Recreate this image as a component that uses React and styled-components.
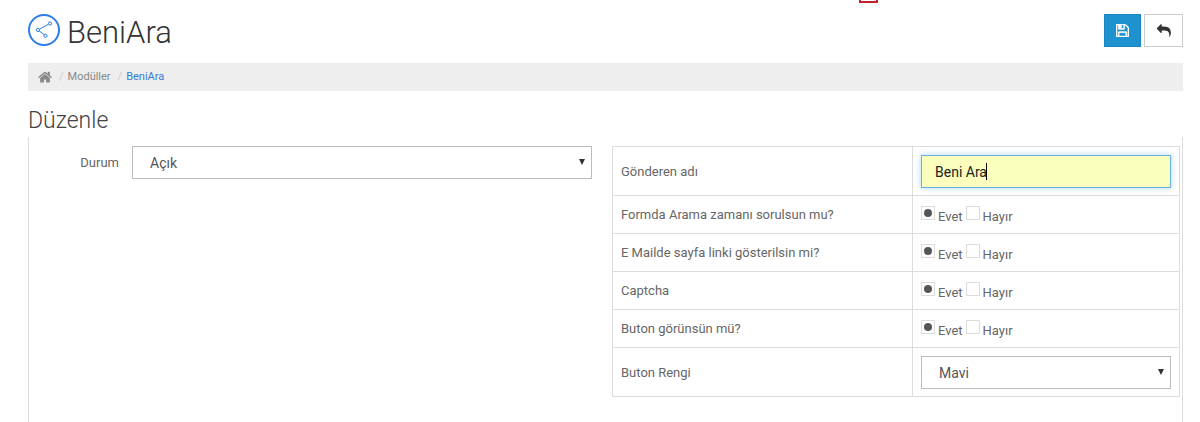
import React, { useState } from 'react'
import styled, { createGlobalStyle } from 'styled-components'

const GlobalStyle = createGlobalStyle`
  *, *::before, *::after {
    box-sizing: border-box;
  }

  body {
    margin: 0;
    background: #fff;
    color: #666;
    font-family: Roboto, "Open Sans", sans-serif;
    font-size: 13px;
    line-height: 20px;
  }
`

const Page = styled.div`
  position: relative;
  display: flex;
  flex-direction: column;
  min-height: 100vh;
  padding: 14px 17px 0 28px;
`

const Marker = styled.span`
  position: absolute;
  top: 0;
  left: 859px;
  width: 19px;
  height: 3px;
  border: 2px solid #c4222c;
  border-top: 0;
`

const Header = styled.header`
  display: flex;
  align-items: flex-start;
  gap: 7px;
`

const Title = styled.h1`
  flex: 1;
  margin: 0;
  font-size: 31px;
  font-weight: 300;
  line-height: 38px;
  color: #333;
`

const Actions = styled.div`
  display: flex;
  gap: 3px;
`

const IconButton = styled.button`
  display: flex;
  align-items: center;
  justify-content: center;
  width: ${(props) => (props.$primary ? 37 : 39)}px;
  height: 33px;
  padding: 0;
  border: 1px solid ${(props) => (props.$primary ? '#1b85c2' : '#ccc')};
  background: ${(props) => (props.$primary ? '#1e91cf' : '#fff')};
  color: ${(props) => (props.$primary ? '#fff' : '#333')};
  cursor: pointer;
`

const Breadcrumb = styled.nav`
  display: flex;
  align-items: center;
  height: 28px;
  margin-top: 11px;
  padding: 0 10px;
  background: #eee;
  font-size: 11px;
`

const Crumb = styled.a`
  display: flex;
  color: ${(props) => (props.$active ? '#3a7bd5' : '#888')};
  text-decoration: none;
`

const Separator = styled.span`
  padding: 0 4px 0 7px;
  color: #ccc;
`

const Heading = styled.h2`
  margin: 16px 0 2px;
  font-size: 23px;
  font-weight: 300;
  line-height: 28px;
  color: #444;
`

const Panel = styled.main`
  flex: 1;
  display: grid;
  grid-template-columns: 563fr 568fr;
  align-items: start;
  gap: 20px;
  padding: 9px 2px 0 0;
  border: 1px solid #ddd;
  border-width: 0 1px;
`

const FormRow = styled.div`
  display: flex;
  align-items: center;
`

const Label = styled.label`
  width: ${(props) => (props.$side ? '103px' : 'auto')};
  padding-right: ${(props) => (props.$side ? '13px' : '0')};
  text-align: ${(props) => (props.$side ? 'right' : 'left')};
`

const Field = styled.div`
  position: relative;
  flex: 1;
`

const Select = styled.select`
  display: block;
  width: 100%;
  height: 33px;
  padding: 0 17px;
  border: 1px solid #bbb;
  border-radius: 0;
  background: #fff;
  color: #555;
  font: 14px Roboto, "Open Sans", sans-serif;
  appearance: none;
`

const Arrow = styled.span`
  position: absolute;
  top: 13px;
  right: 7px;
  border: 3px solid transparent;
  border-top: 6px solid #333;
  border-bottom: 0;
  pointer-events: none;
`

const TextInput = styled.input`
  display: block;
  width: 100%;
  height: 33px;
  padding: 0 13px;
  border: 1px solid #66afe9;
  border-radius: 0;
  outline: 0;
  background: #faffbd;
  box-shadow: 0 0 6px rgba(102, 175, 233, 0.5);
  color: #222;
  font: 14px Roboto, "Open Sans", sans-serif;
  caret-color: transparent;
`

const Caret = styled.span`
  position: absolute;
  top: 8px;
  left: 65px;
  width: 1px;
  height: 17px;
  background: #000;
  pointer-events: none;
`

const Table = styled.table`
  width: 100%;
  border-collapse: collapse;
  table-layout: fixed;
`

const Cell = styled.td`
  width: ${(props) => (props.$name ? '300px' : 'auto')};
  height: 38px;
  padding: 8px 8px 7px;
  border: 1px solid #ddd;
  vertical-align: middle;
`

const Options = styled.div`
  display: flex;
  align-items: flex-start;
  gap: 3px;
  margin-bottom: -2px;
`

const Option = styled.label`
  display: flex;
  align-items: flex-start;
  gap: 3px;
  padding-top: 2px;
  line-height: 22px;
`

const Radio = styled.input`
  display: flex;
  align-items: center;
  justify-content: center;
  width: 14px;
  height: 14px;
  margin: 0;
  border: 1px solid #ddd;
  background: #fff;
  appearance: none;

  &:checked::before {
    content: '';
    width: 8px;
    height: 8px;
    border-radius: 50%;
    background: #555;
  }
`

const questions = [
  { id: 'time', text: 'Formda Arama zamanı sorulsun mu?' },
  { id: 'link', text: 'E Mailde sayfa linki gösterilsin mi?' },
  { id: 'captcha', text: 'Captcha' },
  { id: 'button', text: 'Buton görünsün mü?' },
]

function Logo() {
  return (
    <svg width="32" height="32" viewBox="0 0 32 32" fill="none" stroke="#2b7de9">
      <circle cx="16" cy="16" r="15" strokeWidth="2" />
      <path d="M11.5 15.2 20.3 10.3M11.3 17 16.4 20.8" />
      <circle cx="22" cy="9.5" r="1.6" />
      <circle cx="10" cy="16" r="1.6" />
      <circle cx="17.5" cy="21.8" r="1.6" />
    </svg>
  )
}

function HomeIcon() {
  return (
    <svg width="14" height="14" viewBox="64 100 1664 1536" fill="currentColor">
      <path d="M1472 992v480q0 26-19 45t-45 19h-384v-384h-256v384h-384q-26 0-45-19t-19-45v-480q0-1 .5-3t.5-3l575-474 575 474q1 2 1 6zm223-69l-62 74q-8 9-21 11h-3q-13 0-21-7l-692-577-692 577q-12 8-24 7-13-2-21-11l-62-74q-8-10-7-23.5t11-21.5l719-599q32-26 76-26t76 26l244 204v-195q0-14 9-23t23-9h192q14 0 23 9t9 23v408l219 182q10 8 11 21.5t-7 23.5z" />
    </svg>
  )
}

function SaveIcon() {
  return (
    <svg width="13" height="13" viewBox="0 128 1536 1536" fill="currentColor" stroke="currentColor" strokeWidth="50">
      <path d="M384 1536h768v-384h-768v384zM1280 1536h128v-896q0-14-10-38.5t-20-34.5l-281-281q-10-10-34-20t-39-10v416q0 40-28 68t-68 28h-576q-40 0-68-28t-28-68v-416h-128v1280h128v-416q0-40 28-68t68-28h832q40 0 68 28t28 68v416zM896 608v-320q0-13-9.5-22.5t-22.5-9.5h-192q-13 0-22.5 9.5t-9.5 22.5v320q0 13 9.5 22.5t22.5 9.5h192q13 0 22.5-9.5t9.5-22.5zM1536 640v928q0 40-28 68t-68 28h-1344q-40 0-68-28t-28-68v-1344q0-40 28-68t68-28h928q40 0 88 20t76 48l280 280q28 28 48 76t20 88z" />
    </svg>
  )
}

function ReplyIcon() {
  return (
    <svg width="14" height="14" viewBox="0 0 1792 1792" fill="currentColor">
      <path d="M1792 1120q0 166-127 451-3 7-10.5 24t-13.5 30-13 22q-12 17-28 17-15 0-23.5-10t-8.5-25q0-9 2.5-26.5t2.5-23.5q5-68 5-123 0-112-19.5-200.5t-54-153.5-89-112-117.5-78.5-142-45-158.5-22.5-171.5-6h-224v256q0 26-19 45t-45 19-45-19l-512-512q-19-19-19-45t19-45l512-512q19-19 45-19t45 19 19 45v256h224q713 0 875 403 53 134 53 333z" />
    </svg>
  )
}

function App() {
  const [sender, setSender] = useState('Beni Ara')

  return (
    <Page>
      <GlobalStyle />
      <Marker />
      <Header>
        <Logo />
        <Title>BeniAra</Title>
        <Actions>
          <IconButton $primary type="button" aria-label="Kaydet">
            <SaveIcon />
          </IconButton>
          <IconButton type="button" aria-label="Geri">
            <ReplyIcon />
          </IconButton>
        </Actions>
      </Header>
      <Breadcrumb>
        <Crumb href="#" aria-label="Anasayfa">
          <HomeIcon />
        </Crumb>
        <Separator>/</Separator>
        <Crumb href="#">Modüller</Crumb>
        <Separator>/</Separator>
        <Crumb href="#" $active>BeniAra</Crumb>
      </Breadcrumb>
      <Heading>Düzenle</Heading>
      <Panel>
        <FormRow>
          <Label $side htmlFor="status">Durum</Label>
          <Field>
            <Select id="status" defaultValue="1">
              <option value="1">Açık</option>
              <option value="0">Kapalı</option>
            </Select>
            <Arrow />
          </Field>
        </FormRow>
        <Table>
          <tbody>
            <tr>
              <Cell $name>
                <Label htmlFor="sender">Gönderen adı</Label>
              </Cell>
              <Cell>
                <Field>
                  <TextInput
                    id="sender"
                    type="text"
                    value={sender}
                    onChange={(e) => setSender(e.target.value)}
                  />
                  <Caret />
                </Field>
              </Cell>
            </tr>
            {questions.map((question) => (
              <tr key={question.id}>
                <Cell $name>{question.text}</Cell>
                <Cell>
                  <Options role="radiogroup" aria-label={question.text}>
                    <Option>
                      <Radio type="radio" name={question.id} value="1" defaultChecked />
                      Evet
                    </Option>
                    <Option>
                      <Radio type="radio" name={question.id} value="0" />
                      Hayır
                    </Option>
                  </Options>
                </Cell>
              </tr>
            ))}
            <tr>
              <Cell $name>
                <Label htmlFor="color">Buton Rengi</Label>
              </Cell>
              <Cell>
                <Field>
                  <Select id="color" defaultValue="mavi">
                    <option value="mavi">Mavi</option>
                    <option value="yesil">Yeşil</option>
                  </Select>
                  <Arrow />
                </Field>
              </Cell>
            </tr>
          </tbody>
        </Table>
      </Panel>
    </Page>
  )
}

export default App
